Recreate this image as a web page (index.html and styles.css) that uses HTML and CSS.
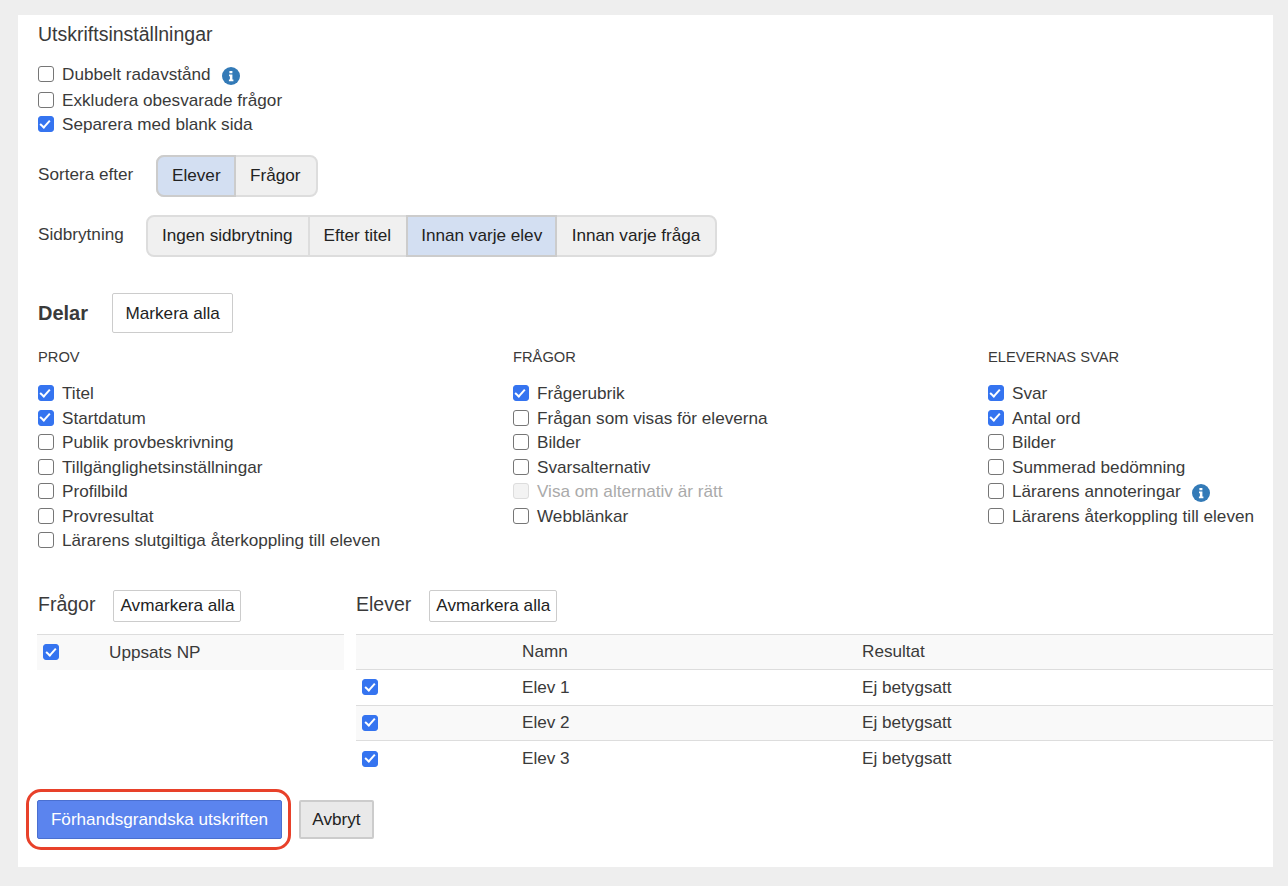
FILE: index.html
```html
<!DOCTYPE html>
<html lang="sv">
<head>
<meta charset="UTF-8">
<meta name="viewport" content="width=device-width, initial-scale=1.0">
<title>Utskriftsinställningar</title>
<link rel="stylesheet" href="styles.css">
</head>
<body>

<main class="panel">
  <h2 class="page-title">Utskriftsinställningar</h2>

  <div class="check-list options">
    <label class="check first-option"><input type="checkbox"> Dubbelt radavstånd
      <svg class="info" viewBox="0 0 18 18"><circle cx="9" cy="9" r="9" fill="#337ab7"/><path d="M7.4 3.9h3v2.4h-3zM7 7.5h3.4v5h1v1.7H6.9v-1.7h1v-3.3H7z" fill="#fff"/></svg>
    </label>
    <label class="check"><input type="checkbox"> Exkludera obesvarade frågor</label>
    <label class="check"><input type="checkbox" checked> Separera med blank sida</label>
  </div>

  <div class="setting sort-setting">
    <span class="setting-label">Sortera efter</span>
    <div class="btn-group">
      <button class="active">Elever</button>
      <button>Frågor</button>
    </div>
  </div>

  <div class="setting break-setting">
    <span class="setting-label">Sidbrytning</span>
    <div class="btn-group">
      <button>Ingen sidbrytning</button>
      <button>Efter titel</button>
      <button class="active">Innan varje elev</button>
      <button>Innan varje fråga</button>
    </div>
  </div>

  <div class="parts-head">
    <h3>Delar</h3>
    <button class="btn-plain">Markera alla</button>
  </div>

  <div class="parts">
    <div>
      <h4>Prov</h4>
      <div class="check-list">
        <label class="check"><input type="checkbox" checked> Titel</label>
        <label class="check"><input type="checkbox" checked> Startdatum</label>
        <label class="check"><input type="checkbox"> Publik provbeskrivning</label>
        <label class="check"><input type="checkbox"> Tillgänglighetsinställningar</label>
        <label class="check"><input type="checkbox"> Profilbild</label>
        <label class="check"><input type="checkbox"> Provresultat</label>
        <label class="check"><input type="checkbox"> Lärarens slutgiltiga återkoppling till eleven</label>
      </div>
    </div>
    <div>
      <h4>Frågor</h4>
      <div class="check-list">
        <label class="check"><input type="checkbox" checked> Frågerubrik</label>
        <label class="check"><input type="checkbox"> Frågan som visas för eleverna</label>
        <label class="check"><input type="checkbox"> Bilder</label>
        <label class="check"><input type="checkbox"> Svarsalternativ</label>
        <label class="check disabled"><input type="checkbox" disabled> Visa om alternativ är rätt</label>
        <label class="check"><input type="checkbox"> Webblänkar</label>
      </div>
    </div>
    <div>
      <h4>Elevernas svar</h4>
      <div class="check-list">
        <label class="check"><input type="checkbox" checked> Svar</label>
        <label class="check"><input type="checkbox" checked> Antal ord</label>
        <label class="check"><input type="checkbox"> Bilder</label>
        <label class="check"><input type="checkbox"> Summerad bedömning</label>
        <label class="check"><input type="checkbox"> Lärarens annoteringar
          <svg class="info" viewBox="0 0 18 18"><circle cx="9" cy="9" r="9" fill="#337ab7"/><path d="M7.4 3.9h3v2.4h-3zM7 7.5h3.4v5h1v1.7H6.9v-1.7h1v-3.3H7z" fill="#fff"/></svg>
        </label>
        <label class="check"><input type="checkbox"> Lärarens återkoppling till eleven</label>
      </div>
    </div>
  </div>

  <div class="pickers">
    <section class="picker-questions">
      <div class="picker-head">
        <span class="picker-title">Frågor</span>
        <button class="btn-plain btn-small">Avmarkera alla</button>
      </div>
      <table>
        <tr class="striped">
          <td class="col-check"><input type="checkbox" checked></td>
          <td>Uppsats NP</td>
        </tr>
      </table>
    </section>

    <section class="picker-students">
      <div class="picker-head">
        <span class="picker-title">Elever</span>
        <button class="btn-plain btn-small">Avmarkera alla</button>
      </div>
      <table>
        <tr class="striped">
          <th class="col-check-wide"></th>
          <th class="col-name">Namn</th>
          <th>Resultat</th>
        </tr>
        <tr>
          <td><input type="checkbox" checked></td>
          <td>Elev 1</td>
          <td>Ej betygsatt</td>
        </tr>
        <tr class="striped">
          <td><input type="checkbox" checked></td>
          <td>Elev 2</td>
          <td>Ej betygsatt</td>
        </tr>
        <tr>
          <td><input type="checkbox" checked></td>
          <td>Elev 3</td>
          <td>Ej betygsatt</td>
        </tr>
      </table>
    </section>
  </div>

  <div class="actions">
    <div class="highlight-wrap">
      <button class="btn-primary">Förhandsgrandska utskriften</button>
      <span class="highlight"></span>
    </div>
    <button class="btn-cancel">Avbryt</button>
  </div>
</main>

</body>
</html>
```

FILE: styles.css
```css
/* Grundstil */
body {
  margin: 0;
  background-color: #eee;
  color: #3a3a3a;
  font-family: "Liberation Sans", Arial, sans-serif;
  font-size: 17.15px;
}
button {
  font-family: inherit;
  font-size: 17.15px;
  color: #222;
  cursor: pointer;
}
.panel {
  margin: 15px 15px 19px 18px;
  height: 852px;
  box-sizing: border-box;
  padding: 8px 0 0 20px;
  background-color: #fff;
}
.page-title {
  margin: 0 0 17px;
  font-size: 19.5px;
  font-weight: normal;
  line-height: 22px;
}

/* Checkboxar */
.check-list {
  display: flex;
  flex-direction: column;
}
.check {
  display: flex;
  align-items: center;
  height: 24.5px;
  white-space: nowrap;
}
.first-option {
  box-sizing: border-box;
  height: 26px;
  padding-bottom: 1px;
}
.check.disabled {
  color: #aaa;
}
input[type="checkbox"] {
  appearance: none;
  position: relative;
  flex: none;
  box-sizing: border-box;
  width: 16px;
  height: 16px;
  margin: -1px 8.5px 0 -0.5px;
  border: 1.5px solid #767676;
  border-radius: 3px;
  background-color: #fff;
  vertical-align: middle;
}
input[type="checkbox"]:checked {
  border-color: #3574f0;
  background-color: #3574f0;
}
input[type="checkbox"]:checked::after {
  content: "";
  position: absolute;
  left: 3.7px;
  top: 0.5px;
  width: 4px;
  height: 8px;
  border: solid #fff;
  border-width: 0 2.5px 2.5px 0;
  transform: rotate(42deg);
}
input[type="checkbox"]:disabled {
  border-color: #ddd;
  background-color: #f3f3f3;
}
.info {
  width: 18px;
  height: 18px;
  margin: 3px 0 0 11px;
}

/* Sortering och sidbrytning */
.setting {
  display: flex;
  align-items: center;
  margin-top: 18px;
}
.setting-label {
  margin-bottom: 3px;
}
.sort-setting .setting-label {
  width: 118px;
}
.break-setting .setting-label {
  width: 108px;
}
.btn-group {
  display: flex;
  height: 42px;
  box-sizing: border-box;
  border: 2px solid #ddd;
  border-radius: 8px;
  background-color: #f0f0f0;
}
.btn-group button {
  padding: 0 15px 2px 14px;
  border: 0;
  border-left: 2px solid #ddd;
  background-color: transparent;
}
.btn-group button:first-child {
  border-left: 0;
}
.btn-group button.active {
  margin: -2px 0;
  padding: 0 13px 2px;
  border: 2px solid #ccc;
  background-color: #d3dff2;
}
.btn-group button.active:first-child {
  margin-left: -2px;
  padding-left: 14px;
  border-radius: 8px 0 0 8px;
}
.btn-group .active + button {
  padding-left: 14.5px;
  border-left: 0;
}

/* Delar */
.parts-head {
  display: flex;
  align-items: center;
  gap: 24px;
  margin-top: 36px;
}
.parts-head h3 {
  margin: 0;
  font-size: 20px;
  line-height: 22px;
}
.btn-plain {
  height: 40px;
  padding: 0 12.5px;
  border: 1px solid #ccc;
  border-radius: 2px;
  background-color: #fff;
}
.parts {
  display: grid;
  grid-template-columns: 475px 475px 1fr;
  margin-top: 15px;
}
.parts h4 {
  margin: 0 0 15.5px;
  font-size: 14.7px;
  font-weight: normal;
  line-height: 18px;
  text-transform: uppercase;
}

/* Tabeller */
.pickers {
  display: flex;
  gap: 12px;
  margin: 36.5px 0 0 -1px;
}
.picker-questions {
  width: 307px;
  flex: none;
}
.picker-students {
  flex: 1;
  min-width: 0;
}
.picker-head {
  display: flex;
  align-items: center;
  height: 32px;
  margin-bottom: 12px;
}
.picker-title {
  font-size: 19.5px;
  margin-bottom: 2px;
}
.picker-questions .picker-title {
  margin-left: 1px;
  margin-right: 18px;
}
.picker-students .picker-title {
  margin-right: 18px;
}
.btn-small {
  height: 32px;
  padding: 0 6px;
}
table {
  width: 100%;
  border-collapse: collapse;
  table-layout: fixed;
}
th, td {
  height: 35.5px;
  box-sizing: border-box;
  padding: 0 6px;
  border-top: 1px solid #ddd;
  font-weight: normal;
  text-align: left;
}
td input[type="checkbox"] {
  margin: 0;
  display: block;
}
.striped {
  background-color: #f9f9f9;
}
.col-check {
  width: 66px;
}
.col-check-wide {
  width: 160px;
}
.col-name {
  width: 340px;
}

/* Knappar längst ner */
.actions {
  display: flex;
  gap: 17px;
  margin: 24px 0 0 -1px;
}
.highlight-wrap {
  position: relative;
}
.btn-primary {
  display: block;
  width: 245px;
  height: 39px;
  padding: 0;
  border: 1px solid #4a6fd0;
  border-radius: 2px;
  background-color: #5b84ee;
  color: #fff;
}
.highlight {
  position: absolute;
  top: -11px;
  left: -11px;
  width: 265px;
  height: 61px;
  box-sizing: border-box;
  border: 3px solid #e8412a;
  border-radius: 15px;
  pointer-events: none;
}
.btn-cancel {
  width: 75px;
  height: 39px;
  padding: 0;
  border: 2px solid #ccc;
  border-radius: 2px;
  background-color: #e9e9e9;
}
```
